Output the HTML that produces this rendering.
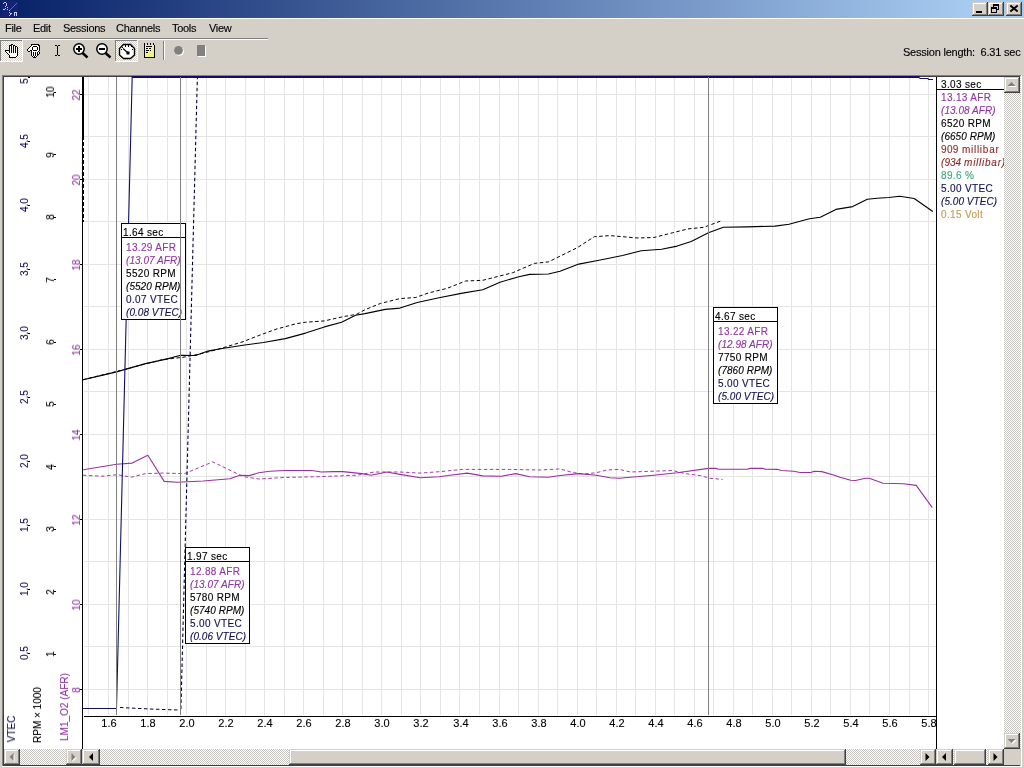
<!DOCTYPE html>
<html><head><meta charset="utf-8"><title>chart</title>
<style>
html,body{margin:0;padding:0;}
.a,.bx,.lg{will-change:transform;}
div{-webkit-text-stroke:0.12px currentColor;}
body{width:1024px;height:768px;overflow:hidden;position:relative;background:#d4d0c8;font-family:"Liberation Sans",sans-serif;font-size:11px;color:#000;}
.a{position:absolute;white-space:nowrap;}
.menu{top:22px;font-size:11px;line-height:13px;letter-spacing:-0.3px;}
.lg{position:absolute;left:0;font-size:10px;line-height:13px;letter-spacing:0.35px;white-space:nowrap;}
.i{font-style:italic;letter-spacing:0.05px !important;}
.ml{letter-spacing:0.75px;}
.bx{position:absolute;background:#fff;border:1px solid #000;}
.bx .h{position:absolute;left:0;top:0;right:0;height:13px;border-bottom:1px solid #000;}
.bx div{white-space:nowrap;font-size:10px;line-height:13px;letter-spacing:0.35px;}
.afr{color:#8e38a0;}
.rpm{color:#000;}
.vt{color:#101050;}
.mb{color:#8e2a2a;}
.pc{color:#3aa57a;}
.vo{color:#c09a50;}
</style></head><body>

<svg class="a" style="left:0;top:0" width="1024" height="768" viewBox="0 0 1024 768"><defs><linearGradient id="tg" gradientUnits="userSpaceOnUse" x1="21" x2="967" y1="0" y2="0"><stop offset="0" stop-color="#0a246a"/><stop offset="1" stop-color="#a6caf0"/></linearGradient><pattern id="dith" width="2" height="2" patternUnits="userSpaceOnUse"><rect width="2" height="2" fill="#ffffff"/><rect width="1" height="1" fill="#c8c6c2"/><rect x="1" y="1" width="1" height="1" fill="#c8c6c2"/></pattern><pattern id="dith2" width="2" height="2" patternUnits="userSpaceOnUse"><rect width="2" height="2" fill="#ffffff"/><rect width="1" height="1" fill="#d4d0c8"/><rect x="1" y="1" width="1" height="1" fill="#d4d0c8"/></pattern><clipPath id="plot"><rect x="83" y="76" width="853" height="640"/></clipPath></defs><rect x="0" y="0" width="1024" height="18" fill="url(#tg)"/><rect x="0" y="18" width="1024" height="1" fill="#ffffff"/><rect x="0" y="38" width="268" height="1" fill="#808080"/><rect x="0" y="39" width="268" height="1" fill="#ffffff"/><rect x="2" y="75" width="1019" height="1" fill="#808080"/><rect x="2" y="75" width="1" height="691" fill="#808080"/><rect x="3" y="76" width="1017" height="1" fill="#404040"/><rect x="3" y="76" width="1" height="690" fill="#404040"/><rect x="2" y="766" width="1020" height="1" fill="#ffffff"/><rect x="1021" y="75" width="1" height="692" fill="#ffffff"/><rect x="3" y="765" width="1018" height="1" fill="#404040"/><rect x="1020" y="76" width="1" height="690" fill="#d4d0c8"/><rect x="4" y="77" width="1016" height="672" fill="#ffffff"/><rect x="88" y="77" width="1" height="638" fill="#e4e4e4"/><rect x="108" y="77" width="1" height="638" fill="#e4e4e4"/><rect x="128" y="77" width="1" height="638" fill="#e4e4e4"/><rect x="147" y="77" width="1" height="638" fill="#e4e4e4"/><rect x="167" y="77" width="1" height="638" fill="#e4e4e4"/><rect x="186" y="77" width="1" height="638" fill="#e4e4e4"/><rect x="206" y="77" width="1" height="638" fill="#e4e4e4"/><rect x="225" y="77" width="1" height="638" fill="#e4e4e4"/><rect x="245" y="77" width="1" height="638" fill="#e4e4e4"/><rect x="264" y="77" width="1" height="638" fill="#e4e4e4"/><rect x="284" y="77" width="1" height="638" fill="#e4e4e4"/><rect x="303" y="77" width="1" height="638" fill="#e4e4e4"/><rect x="323" y="77" width="1" height="638" fill="#e4e4e4"/><rect x="342" y="77" width="1" height="638" fill="#e4e4e4"/><rect x="362" y="77" width="1" height="638" fill="#e4e4e4"/><rect x="381" y="77" width="1" height="638" fill="#e4e4e4"/><rect x="401" y="77" width="1" height="638" fill="#e4e4e4"/><rect x="420" y="77" width="1" height="638" fill="#e4e4e4"/><rect x="440" y="77" width="1" height="638" fill="#e4e4e4"/><rect x="459" y="77" width="1" height="638" fill="#e4e4e4"/><rect x="479" y="77" width="1" height="638" fill="#e4e4e4"/><rect x="499" y="77" width="1" height="638" fill="#e4e4e4"/><rect x="518" y="77" width="1" height="638" fill="#e4e4e4"/><rect x="538" y="77" width="1" height="638" fill="#e4e4e4"/><rect x="557" y="77" width="1" height="638" fill="#e4e4e4"/><rect x="577" y="77" width="1" height="638" fill="#e4e4e4"/><rect x="596" y="77" width="1" height="638" fill="#e4e4e4"/><rect x="616" y="77" width="1" height="638" fill="#e4e4e4"/><rect x="635" y="77" width="1" height="638" fill="#e4e4e4"/><rect x="655" y="77" width="1" height="638" fill="#e4e4e4"/><rect x="674" y="77" width="1" height="638" fill="#e4e4e4"/><rect x="694" y="77" width="1" height="638" fill="#e4e4e4"/><rect x="713" y="77" width="1" height="638" fill="#e4e4e4"/><rect x="733" y="77" width="1" height="638" fill="#e4e4e4"/><rect x="752" y="77" width="1" height="638" fill="#e4e4e4"/><rect x="772" y="77" width="1" height="638" fill="#e4e4e4"/><rect x="791" y="77" width="1" height="638" fill="#e4e4e4"/><rect x="811" y="77" width="1" height="638" fill="#e4e4e4"/><rect x="830" y="77" width="1" height="638" fill="#e4e4e4"/><rect x="850" y="77" width="1" height="638" fill="#e4e4e4"/><rect x="869" y="77" width="1" height="638" fill="#e4e4e4"/><rect x="889" y="77" width="1" height="638" fill="#e4e4e4"/><rect x="909" y="77" width="1" height="638" fill="#e4e4e4"/><rect x="928" y="77" width="1" height="638" fill="#e4e4e4"/><rect x="84" y="689" width="852" height="1" fill="#e4e4e4"/><rect x="84" y="646" width="852" height="1" fill="#e4e4e4"/><rect x="84" y="604" width="852" height="1" fill="#e4e4e4"/><rect x="84" y="561" width="852" height="1" fill="#e4e4e4"/><rect x="84" y="519" width="852" height="1" fill="#e4e4e4"/><rect x="84" y="476" width="852" height="1" fill="#e4e4e4"/><rect x="84" y="434" width="852" height="1" fill="#e4e4e4"/><rect x="84" y="391" width="852" height="1" fill="#e4e4e4"/><rect x="84" y="349" width="852" height="1" fill="#e4e4e4"/><rect x="84" y="306" width="852" height="1" fill="#e4e4e4"/><rect x="84" y="264" width="852" height="1" fill="#e4e4e4"/><rect x="84" y="221" width="852" height="1" fill="#e4e4e4"/><rect x="84" y="179" width="852" height="1" fill="#e4e4e4"/><rect x="84" y="136" width="852" height="1" fill="#e4e4e4"/><rect x="84" y="94" width="852" height="1" fill="#e4e4e4"/><g clip-path="url(#plot)" fill="none" stroke-linejoin="round"><polyline points="83.0,379.7 125.0,369.4 145.0,364.0 163.0,359.5 183.0,357.3 200.0,354.0 217.4,349.5 243.0,341.7 258.8,335.5 276.0,329.2 296.0,323.8 305.6,322.2 324.4,320.9 343.0,316.7 356.4,314.4 365.0,309.7 380.6,303.4 400.0,298.6 415.6,297.5 428.0,293.1 446.9,288.4 465.6,281.0 482.8,280.3 496.9,276.7 512.5,272.8 534.4,263.4 548.4,261.9 560.0,256.2 577.2,247.7 594.4,236.7 610.0,235.6 622.5,236.7 638.0,238.0 653.8,237.5 672.5,232.8 688.0,228.9 703.8,227.3 722.7,220.3" stroke="#000" stroke-width="1" stroke-dasharray="3.5 2.5"/><polyline points="83.0,379.7 98.6,376.1 116.6,371.9 125.2,369.4 145.5,363.6 167.4,358.9 180.7,355.3 195.5,355.5 208.0,351.1 219.0,349.0 243.0,345.2 263.4,342.5 285.3,338.6 305.6,333.1 324.4,326.9 341.6,322.2 355.6,315.2 365.0,313.6 385.3,309.4 400.0,308.1 417.2,302.5 439.0,297.8 462.5,293.1 482.8,289.7 500.0,282.2 518.8,276.7 529.7,274.4 548.4,274.0 560.0,271.2 578.8,264.1 599.0,260.2 622.5,255.5 641.2,250.8 661.6,249.2 677.2,246.1 691.2,241.4 708.4,232.8 723.4,227.2 746.9,226.9 775.0,226.1 789.0,224.2 809.4,218.8 820.3,217.2 835.9,209.4 852.7,206.6 867.3,199.3 877.1,198.3 888.8,197.5 899.6,196.2 914.2,198.5 932.8,211.5" stroke="#000" stroke-width="1.1"/><polyline points="83.0,475.2 101.8,476.2 117.4,474.7 131.4,477.2 145.5,473.6 162.7,473.1 184.6,473.6 212.7,461.9 243.0,476.5 258.8,479.0 283.8,477.5 318.1,476.7 357.2,475.2 374.4,472.0 400.0,472.0 420.3,473.1 440.6,471.6 462.5,469.4 509.4,469.4 540.6,470.0 560.0,468.9 572.5,472.5 583.4,474.0 596.0,472.8 606.9,470.0 619.4,469.4 630.3,472.0 653.8,471.2 672.5,470.5 685.0,473.6 700.6,475.6 710.0,478.3 722.7,479.4" stroke="#a03ca8" stroke-width="1" stroke-dasharray="3.5 2.5"/><polyline points="83.0,469.7 116.6,464.2 132.2,463.1 147.8,455.2 164.2,481.4 176.8,482.2 203.3,481.0 229.9,478.8 240.0,475.2 249.4,475.6 258.8,472.8 269.7,471.2 285.3,470.5 311.9,470.5 321.2,472.0 333.8,471.6 343.0,471.6 361.9,473.6 371.2,475.2 386.9,472.0 400.0,474.4 420.3,477.8 439.0,476.7 450.0,475.2 467.2,473.1 482.8,475.9 501.6,476.2 515.6,473.6 529.7,476.7 548.4,477.2 560.0,475.5 578.8,473.6 596.0,475.2 610.0,477.8 619.4,478.3 630.3,477.2 653.8,475.2 677.2,472.8 708.4,468.4 715.6,468.4 718.8,469.2 746.9,469.2 750.0,468.4 762.5,468.4 765.6,469.2 778.0,469.4 781.2,470.5 793.8,471.2 800.0,472.5 811.0,472.5 814.0,471.2 821.9,471.6 834.4,475.2 840.0,477.3 850.7,480.3 855.6,480.5 865.4,478.3 869.3,478.3 883.0,483.2 903.5,483.7 916.2,485.4 932.3,507.6" stroke="#9a30a0" stroke-width="1.1"/><polyline points="120,707.5 150,709 178,710" stroke="#000040" stroke-width="1" stroke-dasharray="3.5 2.5"/><polyline points="180.9,709 197.4,76" stroke="#000040" stroke-width="1.1" stroke-dasharray="3.5 2.5"/><polyline points="83,708.5 116.5,708.5 132.2,76" stroke="#10106a" stroke-width="1.1"/><polyline points="132,77 919.5,77" stroke="#10106a" stroke-width="1.8"/><polyline points="919.5,77.5 920,78.5 928,78.5 928.5,79.5 933,79.5" stroke="#10106a" stroke-width="1.1"/></g><rect x="82" y="77" width="1" height="672" fill="#000"/><rect x="83" y="77" width="1" height="59" fill="#000"/><line x1="83.5" y1="136" x2="83.5" y2="222" stroke="#000" stroke-width="1" stroke-dasharray="4 2"/><rect x="84" y="716" width="852" height="1" fill="#000"/><rect x="936" y="77" width="1" height="672" fill="#000"/><rect x="80" y="689" width="2" height="1" fill="#000"/><rect x="80" y="604" width="2" height="1" fill="#000"/><rect x="80" y="519" width="2" height="1" fill="#000"/><rect x="80" y="434" width="2" height="1" fill="#000"/><rect x="80" y="349" width="2" height="1" fill="#000"/><rect x="80" y="264" width="2" height="1" fill="#000"/><rect x="80" y="179" width="2" height="1" fill="#000"/><rect x="80" y="94" width="2" height="1" fill="#000"/><rect x="54" y="654" width="2" height="1" fill="#000"/><rect x="54" y="591" width="2" height="1" fill="#000"/><rect x="54" y="529" width="2" height="1" fill="#000"/><rect x="54" y="466" width="2" height="1" fill="#000"/><rect x="54" y="404" width="2" height="1" fill="#000"/><rect x="54" y="342" width="2" height="1" fill="#000"/><rect x="54" y="279" width="2" height="1" fill="#000"/><rect x="54" y="217" width="2" height="1" fill="#000"/><rect x="54" y="154" width="2" height="1" fill="#000"/><rect x="54" y="92" width="2" height="1" fill="#000"/><rect x="28" y="653" width="2" height="1" fill="#000"/><rect x="28" y="589" width="2" height="1" fill="#000"/><rect x="28" y="525" width="2" height="1" fill="#000"/><rect x="28" y="461" width="2" height="1" fill="#000"/><rect x="28" y="397" width="2" height="1" fill="#000"/><rect x="28" y="333" width="2" height="1" fill="#000"/><rect x="28" y="269" width="2" height="1" fill="#000"/><rect x="28" y="205" width="2" height="1" fill="#000"/><rect x="28" y="141" width="2" height="1" fill="#000"/><rect x="28" y="77" width="2" height="1" fill="#000"/><rect x="937" y="89" width="67" height="1" fill="#000"/><rect x="4" y="749" width="78" height="16" fill="url(#dith)"/><rect x="4" y="749" width="16" height="16" fill="#404040"/><rect x="4" y="749" width="15" height="15" fill="#d4d0c8"/><rect x="5" y="750" width="14" height="14" fill="#808080"/><rect x="5" y="750" width="13" height="13" fill="#ffffff"/><rect x="6" y="751" width="12" height="12" fill="#d4d0c8"/><polygon points="14.5,754 14.5,762 10.5,758" fill="#ffffff"/><polygon points="13.5,753 13.5,761 9.5,757" fill="#808080"/><rect x="66" y="749" width="16" height="16" fill="#404040"/><rect x="66" y="749" width="15" height="15" fill="#d4d0c8"/><rect x="67" y="750" width="14" height="14" fill="#808080"/><rect x="67" y="750" width="13" height="13" fill="#ffffff"/><rect x="68" y="751" width="12" height="12" fill="#d4d0c8"/><polygon points="72.5,754 72.5,762 76.5,758" fill="#ffffff"/><polygon points="71.5,753 71.5,761 75.5,757" fill="#808080"/><rect x="82" y="749" width="854" height="16" fill="url(#dith)"/><rect x="82" y="749" width="18" height="16" fill="#404040"/><rect x="82" y="749" width="17" height="15" fill="#d4d0c8"/><rect x="83" y="750" width="16" height="14" fill="#808080"/><rect x="83" y="750" width="15" height="13" fill="#ffffff"/><rect x="84" y="751" width="14" height="12" fill="#d4d0c8"/><polygon points="93,753 93,761 89,757" fill="#000"/><rect x="289" y="749" width="557" height="16" fill="#404040"/><rect x="289" y="749" width="556" height="15" fill="#d4d0c8"/><rect x="290" y="750" width="555" height="14" fill="#808080"/><rect x="290" y="750" width="554" height="13" fill="#ffffff"/><rect x="291" y="751" width="553" height="12" fill="#d4d0c8"/><rect x="920" y="749" width="16" height="16" fill="#404040"/><rect x="920" y="749" width="15" height="15" fill="#d4d0c8"/><rect x="921" y="750" width="14" height="14" fill="#808080"/><rect x="921" y="750" width="13" height="13" fill="#ffffff"/><rect x="922" y="751" width="12" height="12" fill="#d4d0c8"/><polygon points="925.5,753 925.5,761 929.5,757" fill="#000"/><rect x="936" y="749" width="68" height="16" fill="url(#dith)"/><rect x="936" y="749" width="17" height="16" fill="#404040"/><rect x="936" y="749" width="16" height="15" fill="#d4d0c8"/><rect x="937" y="750" width="15" height="14" fill="#808080"/><rect x="937" y="750" width="14" height="13" fill="#ffffff"/><rect x="938" y="751" width="13" height="12" fill="#d4d0c8"/><polygon points="946,753 946,761 942,757" fill="#000"/><rect x="954" y="749" width="32" height="16" fill="#404040"/><rect x="954" y="749" width="31" height="15" fill="#d4d0c8"/><rect x="955" y="750" width="30" height="14" fill="#808080"/><rect x="955" y="750" width="29" height="13" fill="#ffffff"/><rect x="956" y="751" width="28" height="12" fill="#d4d0c8"/><rect x="988" y="749" width="16" height="16" fill="#404040"/><rect x="988" y="749" width="15" height="15" fill="#d4d0c8"/><rect x="989" y="750" width="14" height="14" fill="#808080"/><rect x="989" y="750" width="13" height="13" fill="#ffffff"/><rect x="990" y="751" width="12" height="12" fill="#d4d0c8"/><polygon points="993.5,753 993.5,761 997.5,757" fill="#000"/><rect x="1004" y="77" width="17" height="672" fill="url(#dith)"/><rect x="1004" y="77" width="16" height="16" fill="#404040"/><rect x="1004" y="77" width="15" height="15" fill="#d4d0c8"/><rect x="1005" y="78" width="14" height="14" fill="#808080"/><rect x="1005" y="78" width="13" height="13" fill="#ffffff"/><rect x="1006" y="79" width="12" height="12" fill="#d4d0c8"/><polygon points="1008.5,87 1016.5,87 1012.5,83" fill="#ffffff"/><polygon points="1007.5,86 1015.5,86 1011.5,82" fill="#808080"/><rect x="1004" y="733" width="16" height="16" fill="#404040"/><rect x="1004" y="733" width="15" height="15" fill="#d4d0c8"/><rect x="1005" y="734" width="14" height="14" fill="#808080"/><rect x="1005" y="734" width="13" height="13" fill="#ffffff"/><rect x="1006" y="735" width="12" height="12" fill="#d4d0c8"/><polygon points="1008.5,740 1016.5,740 1012.5,744" fill="#ffffff"/><polygon points="1007.5,739 1015.5,739 1011.5,743" fill="#808080"/><rect x="1004" y="749" width="16" height="16" fill="#d4d0c8"/><rect x="972" y="2" width="16" height="14" fill="#404040"/><rect x="972" y="2" width="15" height="13" fill="#d4d0c8"/><rect x="973" y="3" width="14" height="12" fill="#808080"/><rect x="973" y="3" width="13" height="11" fill="#ffffff"/><rect x="974" y="4" width="12" height="10" fill="#d4d0c8"/><rect x="976" y="11" width="6" height="2" fill="#000"/><rect x="988" y="2" width="16" height="14" fill="#404040"/><rect x="988" y="2" width="15" height="13" fill="#d4d0c8"/><rect x="989" y="3" width="14" height="12" fill="#808080"/><rect x="989" y="3" width="13" height="11" fill="#ffffff"/><rect x="990" y="4" width="12" height="10" fill="#d4d0c8"/><rect x="993" y="4" width="6" height="2" fill="#000"/><rect x="998" y="4" width="1" height="6" fill="#000"/><rect x="996" y="9" width="3" height="1" fill="#000"/><rect x="993" y="4" width="1" height="3" fill="#000"/><rect x="991" y="7" width="6" height="2" fill="#000"/><rect x="991" y="7" width="1" height="6" fill="#000"/><rect x="996" y="7" width="1" height="6" fill="#000"/><rect x="991" y="12" width="6" height="1" fill="#000"/><rect x="1006" y="2" width="16" height="14" fill="#404040"/><rect x="1006" y="2" width="15" height="13" fill="#d4d0c8"/><rect x="1007" y="3" width="14" height="12" fill="#808080"/><rect x="1007" y="3" width="13" height="11" fill="#ffffff"/><rect x="1008" y="4" width="12" height="10" fill="#d4d0c8"/><path d="M1010.3 5.5 L1017.7 11.5 M1017.7 5.5 L1010.3 11.5" stroke="#000" stroke-width="1.9"/><rect x="0" y="40" width="23" height="22" fill="url(#dith2)"/><rect x="0" y="40" width="23" height="1" fill="#808080"/><rect x="0" y="40" width="1" height="22" fill="#808080"/><rect x="0" y="61" width="23" height="1" fill="#fff"/><rect x="22" y="40" width="1" height="22" fill="#fff"/><rect x="115" y="40" width="23" height="22" fill="url(#dith2)"/><rect x="115" y="40" width="23" height="1" fill="#808080"/><rect x="115" y="40" width="1" height="22" fill="#808080"/><rect x="115" y="61" width="23" height="1" fill="#fff"/><rect x="137" y="40" width="1" height="22" fill="#fff"/><rect x="11" y="44" width="1" height="1" fill="#000"/><rect x="12" y="44" width="1" height="1" fill="#000"/><rect x="9" y="45" width="1" height="1" fill="#000"/><rect x="10" y="45" width="1" height="1" fill="#000"/><rect x="11" y="45" width="1" height="1" fill="#000"/><rect x="12" y="45" width="1" height="1" fill="#fff"/><rect x="13" y="45" width="1" height="1" fill="#000"/><rect x="14" y="45" width="1" height="1" fill="#000"/><rect x="9" y="46" width="1" height="1" fill="#000"/><rect x="10" y="46" width="1" height="1" fill="#fff"/><rect x="11" y="46" width="1" height="1" fill="#000"/><rect x="12" y="46" width="1" height="1" fill="#fff"/><rect x="13" y="46" width="1" height="1" fill="#000"/><rect x="14" y="46" width="1" height="1" fill="#fff"/><rect x="15" y="46" width="1" height="1" fill="#000"/><rect x="16" y="46" width="1" height="1" fill="#000"/><rect x="9" y="47" width="1" height="1" fill="#000"/><rect x="10" y="47" width="1" height="1" fill="#fff"/><rect x="11" y="47" width="1" height="1" fill="#000"/><rect x="12" y="47" width="1" height="1" fill="#fff"/><rect x="13" y="47" width="1" height="1" fill="#000"/><rect x="14" y="47" width="1" height="1" fill="#fff"/><rect x="15" y="47" width="1" height="1" fill="#000"/><rect x="16" y="47" width="1" height="1" fill="#fff"/><rect x="17" y="47" width="1" height="1" fill="#000"/><rect x="9" y="48" width="1" height="1" fill="#000"/><rect x="10" y="48" width="1" height="1" fill="#fff"/><rect x="11" y="48" width="1" height="1" fill="#000"/><rect x="12" y="48" width="1" height="1" fill="#fff"/><rect x="13" y="48" width="1" height="1" fill="#000"/><rect x="14" y="48" width="1" height="1" fill="#fff"/><rect x="15" y="48" width="1" height="1" fill="#000"/><rect x="16" y="48" width="1" height="1" fill="#fff"/><rect x="17" y="48" width="1" height="1" fill="#000"/><rect x="9" y="49" width="1" height="1" fill="#000"/><rect x="10" y="49" width="1" height="1" fill="#fff"/><rect x="11" y="49" width="1" height="1" fill="#000"/><rect x="12" y="49" width="1" height="1" fill="#fff"/><rect x="13" y="49" width="1" height="1" fill="#000"/><rect x="14" y="49" width="1" height="1" fill="#fff"/><rect x="15" y="49" width="1" height="1" fill="#000"/><rect x="16" y="49" width="1" height="1" fill="#fff"/><rect x="17" y="49" width="1" height="1" fill="#000"/><rect x="5" y="50" width="1" height="1" fill="#000"/><rect x="6" y="50" width="1" height="1" fill="#000"/><rect x="7" y="50" width="1" height="1" fill="#000"/><rect x="8" y="50" width="1" height="1" fill="#000"/><rect x="9" y="50" width="1" height="1" fill="#000"/><rect x="10" y="50" width="1" height="1" fill="#fff"/><rect x="11" y="50" width="1" height="1" fill="#000"/><rect x="12" y="50" width="1" height="1" fill="#fff"/><rect x="13" y="50" width="1" height="1" fill="#000"/><rect x="14" y="50" width="1" height="1" fill="#fff"/><rect x="15" y="50" width="1" height="1" fill="#000"/><rect x="16" y="50" width="1" height="1" fill="#fff"/><rect x="17" y="50" width="1" height="1" fill="#000"/><rect x="5" y="51" width="1" height="1" fill="#000"/><rect x="6" y="51" width="1" height="1" fill="#fff"/><rect x="7" y="51" width="1" height="1" fill="#fff"/><rect x="8" y="51" width="1" height="1" fill="#fff"/><rect x="9" y="51" width="1" height="1" fill="#000"/><rect x="10" y="51" width="1" height="1" fill="#fff"/><rect x="11" y="51" width="1" height="1" fill="#000"/><rect x="12" y="51" width="1" height="1" fill="#fff"/><rect x="13" y="51" width="1" height="1" fill="#000"/><rect x="14" y="51" width="1" height="1" fill="#fff"/><rect x="15" y="51" width="1" height="1" fill="#000"/><rect x="16" y="51" width="1" height="1" fill="#fff"/><rect x="17" y="51" width="1" height="1" fill="#000"/><rect x="6" y="52" width="1" height="1" fill="#000"/><rect x="7" y="52" width="1" height="1" fill="#fff"/><rect x="8" y="52" width="1" height="1" fill="#fff"/><rect x="9" y="52" width="1" height="1" fill="#000"/><rect x="10" y="52" width="1" height="1" fill="#fff"/><rect x="11" y="52" width="1" height="1" fill="#000"/><rect x="12" y="52" width="1" height="1" fill="#fff"/><rect x="13" y="52" width="1" height="1" fill="#000"/><rect x="14" y="52" width="1" height="1" fill="#fff"/><rect x="15" y="52" width="1" height="1" fill="#000"/><rect x="16" y="52" width="1" height="1" fill="#fff"/><rect x="17" y="52" width="1" height="1" fill="#000"/><rect x="7" y="53" width="1" height="1" fill="#000"/><rect x="8" y="53" width="1" height="1" fill="#fff"/><rect x="9" y="53" width="1" height="1" fill="#fff"/><rect x="10" y="53" width="1" height="1" fill="#fff"/><rect x="11" y="53" width="1" height="1" fill="#fff"/><rect x="12" y="53" width="1" height="1" fill="#fff"/><rect x="13" y="53" width="1" height="1" fill="#fff"/><rect x="14" y="53" width="1" height="1" fill="#fff"/><rect x="15" y="53" width="1" height="1" fill="#fff"/><rect x="16" y="53" width="1" height="1" fill="#fff"/><rect x="17" y="53" width="1" height="1" fill="#000"/><rect x="8" y="54" width="1" height="1" fill="#000"/><rect x="9" y="54" width="1" height="1" fill="#fff"/><rect x="10" y="54" width="1" height="1" fill="#fff"/><rect x="11" y="54" width="1" height="1" fill="#fff"/><rect x="12" y="54" width="1" height="1" fill="#fff"/><rect x="13" y="54" width="1" height="1" fill="#fff"/><rect x="14" y="54" width="1" height="1" fill="#fff"/><rect x="15" y="54" width="1" height="1" fill="#fff"/><rect x="16" y="54" width="1" height="1" fill="#fff"/><rect x="17" y="54" width="1" height="1" fill="#000"/><rect x="9" y="55" width="1" height="1" fill="#000"/><rect x="10" y="55" width="1" height="1" fill="#fff"/><rect x="11" y="55" width="1" height="1" fill="#fff"/><rect x="12" y="55" width="1" height="1" fill="#fff"/><rect x="13" y="55" width="1" height="1" fill="#fff"/><rect x="14" y="55" width="1" height="1" fill="#fff"/><rect x="15" y="55" width="1" height="1" fill="#fff"/><rect x="16" y="55" width="1" height="1" fill="#fff"/><rect x="17" y="55" width="1" height="1" fill="#000"/><rect x="9" y="56" width="1" height="1" fill="#000"/><rect x="10" y="56" width="1" height="1" fill="#fff"/><rect x="11" y="56" width="1" height="1" fill="#fff"/><rect x="12" y="56" width="1" height="1" fill="#fff"/><rect x="13" y="56" width="1" height="1" fill="#fff"/><rect x="14" y="56" width="1" height="1" fill="#fff"/><rect x="15" y="56" width="1" height="1" fill="#fff"/><rect x="16" y="56" width="1" height="1" fill="#000"/><rect x="9" y="57" width="1" height="1" fill="#000"/><rect x="10" y="57" width="1" height="1" fill="#000"/><rect x="11" y="57" width="1" height="1" fill="#000"/><rect x="12" y="57" width="1" height="1" fill="#000"/><rect x="13" y="57" width="1" height="1" fill="#000"/><rect x="14" y="57" width="1" height="1" fill="#000"/><rect x="15" y="57" width="1" height="1" fill="#000"/><rect x="31" y="44" width="1" height="1" fill="#000"/><rect x="32" y="44" width="1" height="1" fill="#000"/><rect x="33" y="44" width="1" height="1" fill="#000"/><rect x="34" y="44" width="1" height="1" fill="#000"/><rect x="35" y="44" width="1" height="1" fill="#000"/><rect x="36" y="44" width="1" height="1" fill="#000"/><rect x="37" y="44" width="1" height="1" fill="#000"/><rect x="38" y="44" width="1" height="1" fill="#000"/><rect x="31" y="45" width="1" height="1" fill="#000"/><rect x="32" y="45" width="1" height="1" fill="#fff"/><rect x="33" y="45" width="1" height="1" fill="#fff"/><rect x="34" y="45" width="1" height="1" fill="#fff"/><rect x="35" y="45" width="1" height="1" fill="#fff"/><rect x="36" y="45" width="1" height="1" fill="#fff"/><rect x="37" y="45" width="1" height="1" fill="#fff"/><rect x="38" y="45" width="1" height="1" fill="#000"/><rect x="39" y="45" width="1" height="1" fill="#000"/><rect x="30" y="46" width="1" height="1" fill="#000"/><rect x="31" y="46" width="1" height="1" fill="#fff"/><rect x="32" y="46" width="1" height="1" fill="#fff"/><rect x="33" y="46" width="1" height="1" fill="#000"/><rect x="34" y="46" width="1" height="1" fill="#000"/><rect x="35" y="46" width="1" height="1" fill="#000"/><rect x="36" y="46" width="1" height="1" fill="#000"/><rect x="37" y="46" width="1" height="1" fill="#fff"/><rect x="38" y="46" width="1" height="1" fill="#fff"/><rect x="39" y="46" width="1" height="1" fill="#000"/><rect x="29" y="47" width="1" height="1" fill="#000"/><rect x="30" y="47" width="1" height="1" fill="#fff"/><rect x="31" y="47" width="1" height="1" fill="#fff"/><rect x="32" y="47" width="1" height="1" fill="#000"/><rect x="33" y="47" width="1" height="1" fill="#fff"/><rect x="34" y="47" width="1" height="1" fill="#fff"/><rect x="35" y="47" width="1" height="1" fill="#fff"/><rect x="36" y="47" width="1" height="1" fill="#fff"/><rect x="37" y="47" width="1" height="1" fill="#000"/><rect x="38" y="47" width="1" height="1" fill="#fff"/><rect x="39" y="47" width="1" height="1" fill="#000"/><rect x="28" y="48" width="1" height="1" fill="#000"/><rect x="29" y="48" width="1" height="1" fill="#fff"/><rect x="30" y="48" width="1" height="1" fill="#fff"/><rect x="31" y="48" width="1" height="1" fill="#fff"/><rect x="32" y="48" width="1" height="1" fill="#000"/><rect x="33" y="48" width="1" height="1" fill="#fff"/><rect x="34" y="48" width="1" height="1" fill="#fff"/><rect x="35" y="48" width="1" height="1" fill="#fff"/><rect x="36" y="48" width="1" height="1" fill="#fff"/><rect x="37" y="48" width="1" height="1" fill="#000"/><rect x="38" y="48" width="1" height="1" fill="#fff"/><rect x="39" y="48" width="1" height="1" fill="#000"/><rect x="27" y="49" width="1" height="1" fill="#000"/><rect x="28" y="49" width="1" height="1" fill="#fff"/><rect x="29" y="49" width="1" height="1" fill="#fff"/><rect x="30" y="49" width="1" height="1" fill="#fff"/><rect x="31" y="49" width="1" height="1" fill="#fff"/><rect x="32" y="49" width="1" height="1" fill="#000"/><rect x="33" y="49" width="1" height="1" fill="#fff"/><rect x="34" y="49" width="1" height="1" fill="#fff"/><rect x="35" y="49" width="1" height="1" fill="#fff"/><rect x="36" y="49" width="1" height="1" fill="#fff"/><rect x="37" y="49" width="1" height="1" fill="#000"/><rect x="38" y="49" width="1" height="1" fill="#fff"/><rect x="39" y="49" width="1" height="1" fill="#000"/><rect x="27" y="50" width="1" height="1" fill="#000"/><rect x="28" y="50" width="1" height="1" fill="#fff"/><rect x="29" y="50" width="1" height="1" fill="#fff"/><rect x="30" y="50" width="1" height="1" fill="#000"/><rect x="31" y="50" width="1" height="1" fill="#000"/><rect x="32" y="50" width="1" height="1" fill="#fff"/><rect x="33" y="50" width="1" height="1" fill="#000"/><rect x="34" y="50" width="1" height="1" fill="#000"/><rect x="35" y="50" width="1" height="1" fill="#000"/><rect x="36" y="50" width="1" height="1" fill="#000"/><rect x="37" y="50" width="1" height="1" fill="#fff"/><rect x="38" y="50" width="1" height="1" fill="#fff"/><rect x="39" y="50" width="1" height="1" fill="#000"/><rect x="28" y="51" width="1" height="1" fill="#000"/><rect x="29" y="51" width="1" height="1" fill="#000"/><rect x="31" y="51" width="1" height="1" fill="#000"/><rect x="32" y="51" width="1" height="1" fill="#fff"/><rect x="33" y="51" width="1" height="1" fill="#fff"/><rect x="34" y="51" width="1" height="1" fill="#fff"/><rect x="35" y="51" width="1" height="1" fill="#fff"/><rect x="36" y="51" width="1" height="1" fill="#fff"/><rect x="37" y="51" width="1" height="1" fill="#fff"/><rect x="38" y="51" width="1" height="1" fill="#000"/><rect x="31" y="52" width="1" height="1" fill="#000"/><rect x="32" y="52" width="1" height="1" fill="#fff"/><rect x="33" y="52" width="1" height="1" fill="#000"/><rect x="34" y="52" width="1" height="1" fill="#fff"/><rect x="35" y="52" width="1" height="1" fill="#000"/><rect x="36" y="52" width="1" height="1" fill="#fff"/><rect x="37" y="52" width="1" height="1" fill="#000"/><rect x="38" y="52" width="1" height="1" fill="#fff"/><rect x="39" y="52" width="1" height="1" fill="#000"/><rect x="31" y="53" width="1" height="1" fill="#000"/><rect x="32" y="53" width="1" height="1" fill="#fff"/><rect x="33" y="53" width="1" height="1" fill="#000"/><rect x="34" y="53" width="1" height="1" fill="#fff"/><rect x="35" y="53" width="1" height="1" fill="#000"/><rect x="36" y="53" width="1" height="1" fill="#fff"/><rect x="37" y="53" width="1" height="1" fill="#000"/><rect x="38" y="53" width="1" height="1" fill="#fff"/><rect x="39" y="53" width="1" height="1" fill="#000"/><rect x="31" y="54" width="1" height="1" fill="#000"/><rect x="32" y="54" width="1" height="1" fill="#fff"/><rect x="33" y="54" width="1" height="1" fill="#000"/><rect x="34" y="54" width="1" height="1" fill="#fff"/><rect x="35" y="54" width="1" height="1" fill="#000"/><rect x="36" y="54" width="1" height="1" fill="#fff"/><rect x="37" y="54" width="1" height="1" fill="#000"/><rect x="38" y="54" width="1" height="1" fill="#000"/><rect x="31" y="55" width="1" height="1" fill="#000"/><rect x="32" y="55" width="1" height="1" fill="#fff"/><rect x="33" y="55" width="1" height="1" fill="#000"/><rect x="34" y="55" width="1" height="1" fill="#fff"/><rect x="35" y="55" width="1" height="1" fill="#000"/><rect x="36" y="55" width="1" height="1" fill="#fff"/><rect x="37" y="55" width="1" height="1" fill="#000"/><rect x="32" y="56" width="1" height="1" fill="#000"/><rect x="33" y="56" width="1" height="1" fill="#fff"/><rect x="34" y="56" width="1" height="1" fill="#000"/><rect x="35" y="56" width="1" height="1" fill="#fff"/><rect x="36" y="56" width="1" height="1" fill="#000"/><rect x="33" y="57" width="1" height="1" fill="#000"/><rect x="34" y="57" width="1" height="1" fill="#000"/><rect x="35" y="57" width="1" height="1" fill="#000"/><rect x="55" y="45" width="2" height="1" fill="#000"/><rect x="58" y="45" width="2" height="1" fill="#000"/><rect x="57" y="46" width="1" height="9" fill="#000"/><rect x="55" y="55" width="2" height="1" fill="#000"/><rect x="58" y="55" width="2" height="1" fill="#000"/><line x1="82.5" y1="53" x2="87.5" y2="57.5" stroke="#000" stroke-width="2.4"/><circle cx="79" cy="49" r="5.2" fill="#f4fbfb" stroke="#000" stroke-width="1.5"/><rect x="76" y="48" width="6" height="2" fill="#000"/><rect x="78" y="46" width="2" height="6" fill="#000"/><line x1="105.5" y1="53" x2="110.5" y2="57.5" stroke="#000" stroke-width="2.4"/><circle cx="102" cy="49" r="5.2" fill="#f4fbfb" stroke="#000" stroke-width="1.5"/><rect x="99" y="48" width="6" height="2" fill="#000"/><polygon points="123.5,44.5 130.5,44.5 134.5,48.5 134.5,55 130.5,58.5 123.5,58.5 119.5,55 119.5,48.5" fill="#fff" stroke="#000" stroke-width="1.4"/><rect x="125" y="45" width="1" height="2" fill="#000"/><rect x="128" y="45" width="1" height="2" fill="#000"/><rect x="131" y="46" width="1" height="1" fill="#000"/><rect x="122" y="47" width="1" height="1" fill="#000"/><rect x="132" y="49" width="1" height="1" fill="#000"/><rect x="121" y="49" width="1" height="1" fill="#000"/><line x1="123" y1="48.5" x2="128" y2="53" stroke="#000" stroke-width="1.1"/><rect x="126.5" y="51.5" width="3" height="3" fill="#000"/><rect x="144" y="45" width="11" height="13" fill="#000"/><rect x="144" y="45" width="10" height="12" fill="#f4f47a"/><rect x="144" y="45" width="1" height="12" fill="#000"/><rect x="144" y="43" width="1" height="2" fill="#000"/><rect x="147" y="43" width="1" height="2" fill="#000"/><rect x="150" y="43" width="1" height="2" fill="#000"/><rect x="153" y="43" width="1" height="2" fill="#000"/><rect x="146" y="46" width="6" height="1" fill="#000"/><rect x="146" y="48" width="2" height="1" fill="#000"/><rect x="149" y="48" width="2" height="1" fill="#000"/><rect x="146" y="50" width="3" height="1" fill="#000"/><rect x="150" y="50" width="1" height="1" fill="#000"/><rect x="146" y="52" width="2" height="1" fill="#000"/><rect x="163" y="41" width="1" height="19" fill="#808080"/><rect x="164" y="41" width="1" height="19" fill="#fff"/><circle cx="179.5" cy="51.3" r="4.4" fill="#fff"/><circle cx="178.5" cy="50.3" r="4.4" fill="#808080"/><rect x="198" y="46" width="8" height="11" fill="#fff"/><rect x="197" y="45" width="8" height="11" fill="#808080"/><rect x="2" y="1" width="16" height="16" fill="#3a1aa0" opacity="0.25"/><rect x="3" y="3" width="1" height="1" fill="#c4c8ff"/><rect x="4" y="2" width="1" height="1" fill="#c4c8ff"/><rect x="5" y="2" width="1" height="1" fill="#c4c8ff"/><rect x="6" y="3" width="1" height="1" fill="#c4c8ff"/><rect x="6" y="4" width="1" height="1" fill="#c4c8ff"/><rect x="6" y="5" width="1" height="1" fill="#c4c8ff"/><rect x="5" y="6" width="1" height="1" fill="#c4c8ff"/><rect x="7" y="7" width="1" height="1" fill="#c4c8ff"/><rect x="5" y="8" width="1" height="1" fill="#c4c8ff"/><rect x="7" y="9" width="1" height="1" fill="#c4c8ff"/><rect x="3" y="9" width="1" height="1" fill="#c4c8ff"/><rect x="4" y="9" width="1" height="1" fill="#c4c8ff"/><rect x="9" y="10" width="1" height="1" fill="#c4c8ff"/><rect x="9" y="12" width="1" height="1" fill="#c4c8ff"/><rect x="10" y="13" width="1" height="1" fill="#c4c8ff"/><rect x="11" y="13" width="1" height="1" fill="#c4c8ff"/><rect x="10" y="14" width="1" height="1" fill="#c4c8ff"/><rect x="9" y="15" width="1" height="1" fill="#c4c8ff"/><rect x="14" y="12" width="1" height="1" fill="#c4c8ff"/><rect x="15" y="12" width="1" height="1" fill="#c4c8ff"/><rect x="16" y="12" width="1" height="1" fill="#c4c8ff"/><rect x="14" y="13" width="1" height="1" fill="#c4c8ff"/><rect x="14" y="14" width="1" height="1" fill="#c4c8ff"/><rect x="14" y="15" width="1" height="1" fill="#c4c8ff"/><rect x="16" y="13" width="1" height="1" fill="#c4c8ff"/><rect x="16" y="14" width="1" height="1" fill="#c4c8ff"/><rect x="16" y="15" width="1" height="1" fill="#c4c8ff"/><rect x="16" y="3" width="1" height="1" fill="#9a46c8"/><rect x="15" y="4" width="1" height="1" fill="#9a46c8"/><rect x="14" y="5" width="1" height="1" fill="#9a46c8"/><rect x="13" y="6" width="1" height="1" fill="#9a46c8"/><rect x="12" y="7" width="1" height="1" fill="#9a46c8"/><rect x="11" y="8" width="1" height="1" fill="#9a46c8"/><rect x="10" y="9" width="1" height="1" fill="#9a46c8"/></svg>
<div class="a menu" style="left:5px">File</div>
<div class="a menu" style="left:33px">Edit</div>
<div class="a menu" style="left:63px">Sessions</div>
<div class="a menu" style="left:116px">Channels</div>
<div class="a menu" style="left:172px">Tools</div>
<div class="a menu" style="left:209px">View</div>
<div class="a" style="left:903px;top:45.5px;font-size:11px;line-height:13px;letter-spacing:-0.22px">Session length:&nbsp; 6.31 sec</div>
<div class="a vt" style="left:24.5px;top:653.38px;transform:translate(-50%,-50%) rotate(-90deg);font-size:10px;line-height:12px;">0.5</div>
<div class="a vt" style="left:24.5px;top:589.345px;transform:translate(-50%,-50%) rotate(-90deg);font-size:10px;line-height:12px;">1.0</div>
<div class="a vt" style="left:24.5px;top:525.31px;transform:translate(-50%,-50%) rotate(-90deg);font-size:10px;line-height:12px;">1.5</div>
<div class="a vt" style="left:24.5px;top:461.275px;transform:translate(-50%,-50%) rotate(-90deg);font-size:10px;line-height:12px;">2.0</div>
<div class="a vt" style="left:24.5px;top:397.24px;transform:translate(-50%,-50%) rotate(-90deg);font-size:10px;line-height:12px;">2.5</div>
<div class="a vt" style="left:24.5px;top:333.205px;transform:translate(-50%,-50%) rotate(-90deg);font-size:10px;line-height:12px;">3.0</div>
<div class="a vt" style="left:24.5px;top:269.16999999999996px;transform:translate(-50%,-50%) rotate(-90deg);font-size:10px;line-height:12px;">3.5</div>
<div class="a vt" style="left:24.5px;top:205.135px;transform:translate(-50%,-50%) rotate(-90deg);font-size:10px;line-height:12px;">4.0</div>
<div class="a vt" style="left:24.5px;top:141.1px;transform:translate(-50%,-50%) rotate(-90deg);font-size:10px;line-height:12px;">4.5</div>
<div class="a vt" style="left:24.5px;top:81.2px;transform:translate(-50%,-50%) rotate(-90deg);font-size:10px;line-height:12px;">5</div>
<div class="a rpm" style="left:50.5px;top:654.0px;transform:translate(-50%,-50%) rotate(-90deg);font-size:10px;line-height:12px;">1</div>
<div class="a rpm" style="left:50.5px;top:591.6px;transform:translate(-50%,-50%) rotate(-90deg);font-size:10px;line-height:12px;">2</div>
<div class="a rpm" style="left:50.5px;top:529.2px;transform:translate(-50%,-50%) rotate(-90deg);font-size:10px;line-height:12px;">3</div>
<div class="a rpm" style="left:50.5px;top:466.79999999999995px;transform:translate(-50%,-50%) rotate(-90deg);font-size:10px;line-height:12px;">4</div>
<div class="a rpm" style="left:50.5px;top:404.4px;transform:translate(-50%,-50%) rotate(-90deg);font-size:10px;line-height:12px;">5</div>
<div class="a rpm" style="left:50.5px;top:342.0px;transform:translate(-50%,-50%) rotate(-90deg);font-size:10px;line-height:12px;">6</div>
<div class="a rpm" style="left:50.5px;top:279.59999999999997px;transform:translate(-50%,-50%) rotate(-90deg);font-size:10px;line-height:12px;">7</div>
<div class="a rpm" style="left:50.5px;top:217.2px;transform:translate(-50%,-50%) rotate(-90deg);font-size:10px;line-height:12px;">8</div>
<div class="a rpm" style="left:50.5px;top:154.79999999999995px;transform:translate(-50%,-50%) rotate(-90deg);font-size:10px;line-height:12px;">9</div>
<div class="a rpm" style="left:50.5px;top:92.39999999999998px;transform:translate(-50%,-50%) rotate(-90deg);font-size:10px;line-height:12px;">10</div>
<div class="a afr" style="left:76.5px;top:689.8100000000001px;transform:translate(-50%,-50%) rotate(-90deg);font-size:10px;line-height:12px;">8</div>
<div class="a afr" style="left:76.5px;top:604.83px;transform:translate(-50%,-50%) rotate(-90deg);font-size:10px;line-height:12px;">10</div>
<div class="a afr" style="left:76.5px;top:519.85px;transform:translate(-50%,-50%) rotate(-90deg);font-size:10px;line-height:12px;">12</div>
<div class="a afr" style="left:76.5px;top:434.87px;transform:translate(-50%,-50%) rotate(-90deg);font-size:10px;line-height:12px;">14</div>
<div class="a afr" style="left:76.5px;top:349.89px;transform:translate(-50%,-50%) rotate(-90deg);font-size:10px;line-height:12px;">16</div>
<div class="a afr" style="left:76.5px;top:264.91px;transform:translate(-50%,-50%) rotate(-90deg);font-size:10px;line-height:12px;">18</div>
<div class="a afr" style="left:76.5px;top:179.93px;transform:translate(-50%,-50%) rotate(-90deg);font-size:10px;line-height:12px;">20</div>
<div class="a afr" style="left:76.5px;top:94.95px;transform:translate(-50%,-50%) rotate(-90deg);font-size:10px;line-height:12px;">22</div>
<div class="a vt" style="left:12px;top:729.4px;transform:translate(-50%,-50%) rotate(-90deg);font-size:10px;line-height:12px;">VTEC</div>
<div class="a rpm" style="left:37.5px;top:714.5px;transform:translate(-50%,-50%) rotate(-90deg);font-size:10px;line-height:12px;">RPM &times; 1000</div>
<div class="a afr" style="left:64.5px;top:707.3px;transform:translate(-50%,-50%) rotate(-90deg);font-size:10px;line-height:12px;">LM1_O2 (AFR)</div>
<div class="a" style="left:89.0px;top:717px;width:40px;text-align:center;font-size:11px;line-height:13px">1.6</div>
<div class="a" style="left:128.0px;top:717px;width:40px;text-align:center;font-size:11px;line-height:13px">1.8</div>
<div class="a" style="left:167.1px;top:717px;width:40px;text-align:center;font-size:11px;line-height:13px">2.0</div>
<div class="a" style="left:206.2px;top:717px;width:40px;text-align:center;font-size:11px;line-height:13px">2.2</div>
<div class="a" style="left:245.2px;top:717px;width:40px;text-align:center;font-size:11px;line-height:13px">2.4</div>
<div class="a" style="left:284.2px;top:717px;width:40px;text-align:center;font-size:11px;line-height:13px">2.6</div>
<div class="a" style="left:323.3px;top:717px;width:40px;text-align:center;font-size:11px;line-height:13px">2.8</div>
<div class="a" style="left:362.3px;top:717px;width:40px;text-align:center;font-size:11px;line-height:13px">3.0</div>
<div class="a" style="left:401.4px;top:717px;width:40px;text-align:center;font-size:11px;line-height:13px">3.2</div>
<div class="a" style="left:440.5px;top:717px;width:40px;text-align:center;font-size:11px;line-height:13px">3.4</div>
<div class="a" style="left:479.5px;top:717px;width:40px;text-align:center;font-size:11px;line-height:13px">3.6</div>
<div class="a" style="left:518.5px;top:717px;width:40px;text-align:center;font-size:11px;line-height:13px">3.8</div>
<div class="a" style="left:557.6px;top:717px;width:40px;text-align:center;font-size:11px;line-height:13px">4.0</div>
<div class="a" style="left:596.7px;top:717px;width:40px;text-align:center;font-size:11px;line-height:13px">4.2</div>
<div class="a" style="left:635.7px;top:717px;width:40px;text-align:center;font-size:11px;line-height:13px">4.4</div>
<div class="a" style="left:674.7px;top:717px;width:40px;text-align:center;font-size:11px;line-height:13px">4.6</div>
<div class="a" style="left:713.8px;top:717px;width:40px;text-align:center;font-size:11px;line-height:13px">4.8</div>
<div class="a" style="left:752.9px;top:717px;width:40px;text-align:center;font-size:11px;line-height:13px">5.0</div>
<div class="a" style="left:791.9px;top:717px;width:40px;text-align:center;font-size:11px;line-height:13px">5.2</div>
<div class="a" style="left:831.0px;top:717px;width:40px;text-align:center;font-size:11px;line-height:13px">5.4</div>
<div class="a" style="left:870.0px;top:717px;width:40px;text-align:center;font-size:11px;line-height:13px">5.6</div>
<div class="a" style="left:909.1px;top:717px;width:40px;text-align:center;font-size:11px;line-height:13px">5.8</div>
<div class="a" style="left:941px;top:78px;width:63px;height:672px;overflow:hidden">
<div class="lg rpm " style="top:0px">3.03 sec</div>
<div class="lg afr " style="top:13px">13.13 AFR</div>
<div class="lg afr i" style="top:26px">(13.08 AFR)</div>
<div class="lg rpm " style="top:39px">6520 RPM</div>
<div class="lg rpm i" style="top:52px">(6650 RPM)</div>
<div class="lg mb " style="top:65px">909 <span class="ml">millibar</span></div>
<div class="lg mb i" style="top:78px">(934 <span class="ml">millibar</span>)</div>
<div class="lg pc " style="top:91px">89.6 %</div>
<div class="lg vt " style="top:104px">5.00 VTEC</div>
<div class="lg vt i" style="top:117px">(5.00 VTEC)</div>
<div class="lg vo " style="top:130px">0.15 Volt</div>
</div>
<div class="bx" style="left:121px;top:223px;width:63px;height:95px"><div class="h"><div style="position:absolute;left:1px;top:2px">1.64 sec</div></div><div class="afr " style="position:absolute;left:4px;top:17px">13.29 AFR</div><div class="afr i" style="position:absolute;left:4px;top:30px">(13.07 AFR)</div><div class="rpm " style="position:absolute;left:4px;top:43px">5520 RPM</div><div class="rpm i" style="position:absolute;left:4px;top:56px">(5520 RPM)</div><div class="vt " style="position:absolute;left:4px;top:69px">0.07 VTEC</div><div class="vt i" style="position:absolute;left:4px;top:82px">(0.08 VTEC)</div></div>
<div class="bx" style="left:185px;top:547px;width:63px;height:95px"><div class="h"><div style="position:absolute;left:1px;top:2px">1.97 sec</div></div><div class="afr " style="position:absolute;left:4px;top:17px">12.88 AFR</div><div class="afr i" style="position:absolute;left:4px;top:30px">(13.07 AFR)</div><div class="rpm " style="position:absolute;left:4px;top:43px">5780 RPM</div><div class="rpm i" style="position:absolute;left:4px;top:56px">(5740 RPM)</div><div class="vt " style="position:absolute;left:4px;top:69px">5.00 VTEC</div><div class="vt i" style="position:absolute;left:4px;top:82px">(0.06 VTEC)</div></div>
<div class="bx" style="left:713px;top:307px;width:63px;height:95px"><div class="h"><div style="position:absolute;left:1px;top:2px">4.67 sec</div></div><div class="afr " style="position:absolute;left:4px;top:17px">13.22 AFR</div><div class="afr i" style="position:absolute;left:4px;top:30px">(12.98 AFR)</div><div class="rpm " style="position:absolute;left:4px;top:43px">7750 RPM</div><div class="rpm i" style="position:absolute;left:4px;top:56px">(7860 RPM)</div><div class="vt " style="position:absolute;left:4px;top:69px">5.00 VTEC</div><div class="vt i" style="position:absolute;left:4px;top:82px">(5.00 VTEC)</div></div>
<svg class="a" style="left:0;top:0" width="1024" height="768"><rect x="116" y="77" width="1" height="638" fill="#808080"/><rect x="180" y="77" width="1" height="638" fill="#808080"/><rect x="708" y="77" width="1" height="638" fill="#808080"/></svg>
</body></html>
